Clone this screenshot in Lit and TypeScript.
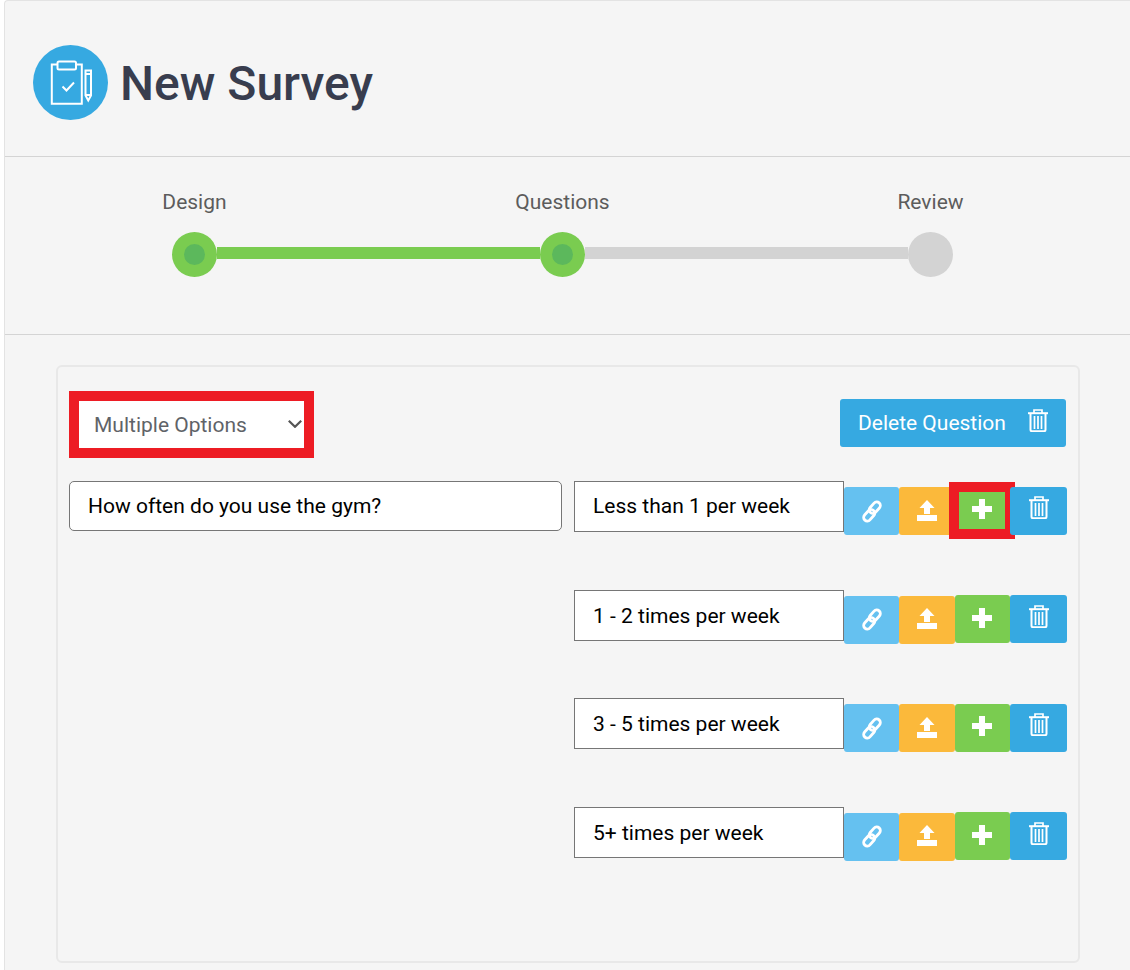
import { LitElement, html, css, svg } from "lit";
import { customElement } from "lit/decorators.js";

const trashPaths = svg`<path d="M0 4.200h20" stroke-width="2"/><path d="M6 4V1h8v3" stroke-width="1.700"/><path d="M2.500 5v15.800a1.400 1.400 0 0 0 1.400 1.400h12.200a1.400 1.400 0 0 0 1.400-1.400V5" stroke-width="2"/><path d="M6.500 7v13M10 7v13M13.500 7v13" stroke-width="1.700"/>`;
const trashLarge = svg`<svg class="ico i-trash-top" width="20" height="23" viewBox="0 0 20 23" fill="none" stroke="#fff">${trashPaths}</svg>`;
const trash = svg`<svg class="ico i-trash" width="20" height="23" viewBox="0 0 20 23" fill="none" stroke="#fff">${trashPaths}</svg>`;
const link = svg`<svg class="ico" width="20" height="23" viewBox="0 0 20 23" fill="none" stroke="#fff" stroke-width="2.800"><rect x="-3.600" y="-6.500" width="7.200" height="13" rx="3.600" transform="translate(12.800 7.700) rotate(42)"/><rect x="-3.600" y="-6.500" width="7.200" height="13" rx="3.600" transform="translate(7.200 15.300) rotate(42)"/></svg>`;
const upload = svg`<svg class="ico i-up" width="20" height="21" viewBox="0 0 20 21" fill="#fff"><path d="M10 0l7.500 8H13v6H7V8H2.500z"/><rect x="0" y="15" width="20" height="6"/></svg>`;
const plus = svg`<svg class="ico i-plus" width="20" height="20" viewBox="0 0 20 20" fill="#fff"><path d="M7 0h6v7h7v6h-7v7H7v-7H0V7h7z"/></svg>`;
const clipboard = svg`<svg class="logo" width="75" height="75" viewBox="0 0 75 75" fill="none" stroke="#fff" stroke-width="2"><circle cx="37.500" cy="37.500" r="37.500" fill="#36a9e1" stroke="none"/><path d="M24.500 19.500h-5.700v39.200h30V19.500H43"/><rect x="24.500" y="16.500" width="18.500" height="8" rx="1.500"/><path d="M29.500 41.500l4 4 7.500-8"/><path d="M52.500 25.500h5.500v25l-2.750 5-2.750-5zM52.500 29h5.500M52.500 50h5.500"/></svg>`;
const chevron = svg`<svg class="chev" width="14" height="8" viewBox="0 0 14 8" fill="none" stroke="#555" stroke-width="2.200"><path d="M.8 .8L7 6.800L13.200 .8"/></svg>`;

const options = ["Less than 1 per week", "1 - 2 times per week", "3 - 5 times per week", "5+ times per week"];

@customElement("app-root")
export class AppRoot extends LitElement {
  static styles = css`
    :host { display: block; height: 970px; overflow: hidden; background: #fff; padding-left: 4px; box-sizing: border-box; font-family: Roboto, sans-serif; }
    .panel { background: #f5f5f5; border: 1px solid #e3e3e3; border-right: none; border-bottom: none; border-top-left-radius: 4px; height: 969px; }
    .head { height: 156px; box-sizing: border-box; border-bottom: 1px solid #d4d4d4; display: flex; align-items: flex-start; padding: 44px 0 0 28px; gap: 12px; }
    .head h1 { margin: 0; font-size: 48px; font-weight: 500; color: #383d4e; line-height: 78px; }
    .logo { display: block; flex: none; }
    .wizard { height: 178px; box-sizing: border-box; border-bottom: 1px solid #d4d4d4; padding-top: 32px; }
    .labels { display: grid; grid-template-columns: repeat(3, 368px); margin-left: 5.5px; font-size: 21px; line-height: 26px; color: #5c5c5c; text-align: center; }
    .track { display: grid; grid-template-columns: 45px 323px 45px 323px 45px; align-items: start; margin: 17px 0 0 167px; }
    .dot { width: 45px; height: 45px; border-radius: 50%; background: #d3d3d3; display: flex; align-items: center; justify-content: center; }
    .dot.on { background: #7acc50; }
    .dot.on i { width: 21px; height: 21px; border-radius: 50%; background: #5cb85c; }
    .line { height: 12px; margin-top: 15px; background: #d3d3d3; }
    .line.on { background: #7acc50; }
    .card { margin: 30px 0 0 51px; width: 1024px; height: 598px; box-sizing: border-box; border: 2px solid #e8e8e8; border-radius: 6px; padding: 24px 12px 0 11px; }
    .top { display: flex; justify-content: space-between; align-items: flex-start; }
    .sel { position: relative; display: block; width: 245px; height: 67px; }
    select { appearance: none; -webkit-appearance: none; display: block; width: 245px; height: 67px; box-sizing: border-box; border: 10px solid #ed1c24; background: #fff; font: 400 21px Roboto, sans-serif; color: #5f6368; padding: 0 30px 0 15px; border-radius: 0; outline: none; }
    .chev { position: absolute; left: 219px; top: 29px; display: block; pointer-events: none; }
    .del { margin: 8px 0 0 0; width: 226px; height: 48px; box-sizing: border-box; border: none; border-radius: 3px; background: #36a9e1; color: #fff; font: 400 21px Roboto, sans-serif; display: flex; align-items: center; justify-content: space-between; padding: 0 18px; }
    .body { display: grid; grid-template-columns: 493px 1fr; column-gap: 12px; margin-top: 23px; align-items: start; }
    input { box-sizing: border-box; background: #fff; border: 1px solid #767676; font: 400 21px Roboto, sans-serif; color: #000; padding: 0 18px; outline: none; margin: 0; }
    .q { width: 493px; height: 50px; border-radius: 5px; }
    .rows { display: flex; flex-direction: column; gap: 57.5px; }
    .row { display: flex; align-items: flex-start; height: 51px; }
    .opt { width: 270px; height: 51px; flex: none; }
    .row:nth-child(1) .opt { padding-bottom: 2px; }
    .row:nth-child(even) .opt { padding-top: 2px; }
    .btn { height: 48px; border: none; padding: 0; border-radius: 3px; display: flex; align-items: center; justify-content: center; flex: none; position: relative; }
    .ico { display: block; }
    .i-trash-top { margin-bottom: 6px; }
    .i-trash { margin: 0 0 6px 1px; }
    .i-up { margin: 0 1px 2px 0; }
    .i-plus { margin: 0 2px 3px 0; }
    .b-link { width: 55px; background: #65c1f0; margin-top: 6.2px; }
    .b-up { width: 56px; background: #fbb93b; margin-top: 6.2px; }
    .b-plus { width: 55px; background: #7acc50; margin-top: 5.8px; }
    .b-del { width: 57px; background: #36a9e1; margin-top: 5.8px; }
    .mark { position: absolute; left: -6px; top: -5px; width: 66px; height: 57px; box-sizing: border-box; border: 10px solid #ed1c24; }
  `;

  render() {
    return html`<div class="panel">
      <div class="head">${clipboard}<h1>New Survey</h1></div>
      <div class="wizard">
        <div class="labels"><span>Design</span><span>Questions</span><span>Review</span></div>
        <div class="track">
          <div class="dot on"><i></i></div><div class="line on"></div>
          <div class="dot on"><i></i></div><div class="line"></div>
          <div class="dot"></div>
        </div>
      </div>
      <div class="card">
        <div class="top">
          <div class="sel"><select><option>Multiple Options</option></select>${chevron}</div>
          <button class="del"><span>Delete Question</span>${trashLarge}</button>
        </div>
        <div class="body">
          <input class="q" value="How often do you use the gym?" />
          <div class="rows">
            ${options.map((o, i) => html`<div class="row">
              <input class="opt" value=${o} />
              <button class="btn b-link">${link}</button>
              <button class="btn b-up">${upload}</button>
              <button class="btn b-plus">${plus}${i === 0 ? html`<span class="mark"></span>` : ""}</button>
              <button class="btn b-del">${trash}</button>
            </div>`)}
          </div>
        </div>
      </div>
    </div>`;
  }
}
